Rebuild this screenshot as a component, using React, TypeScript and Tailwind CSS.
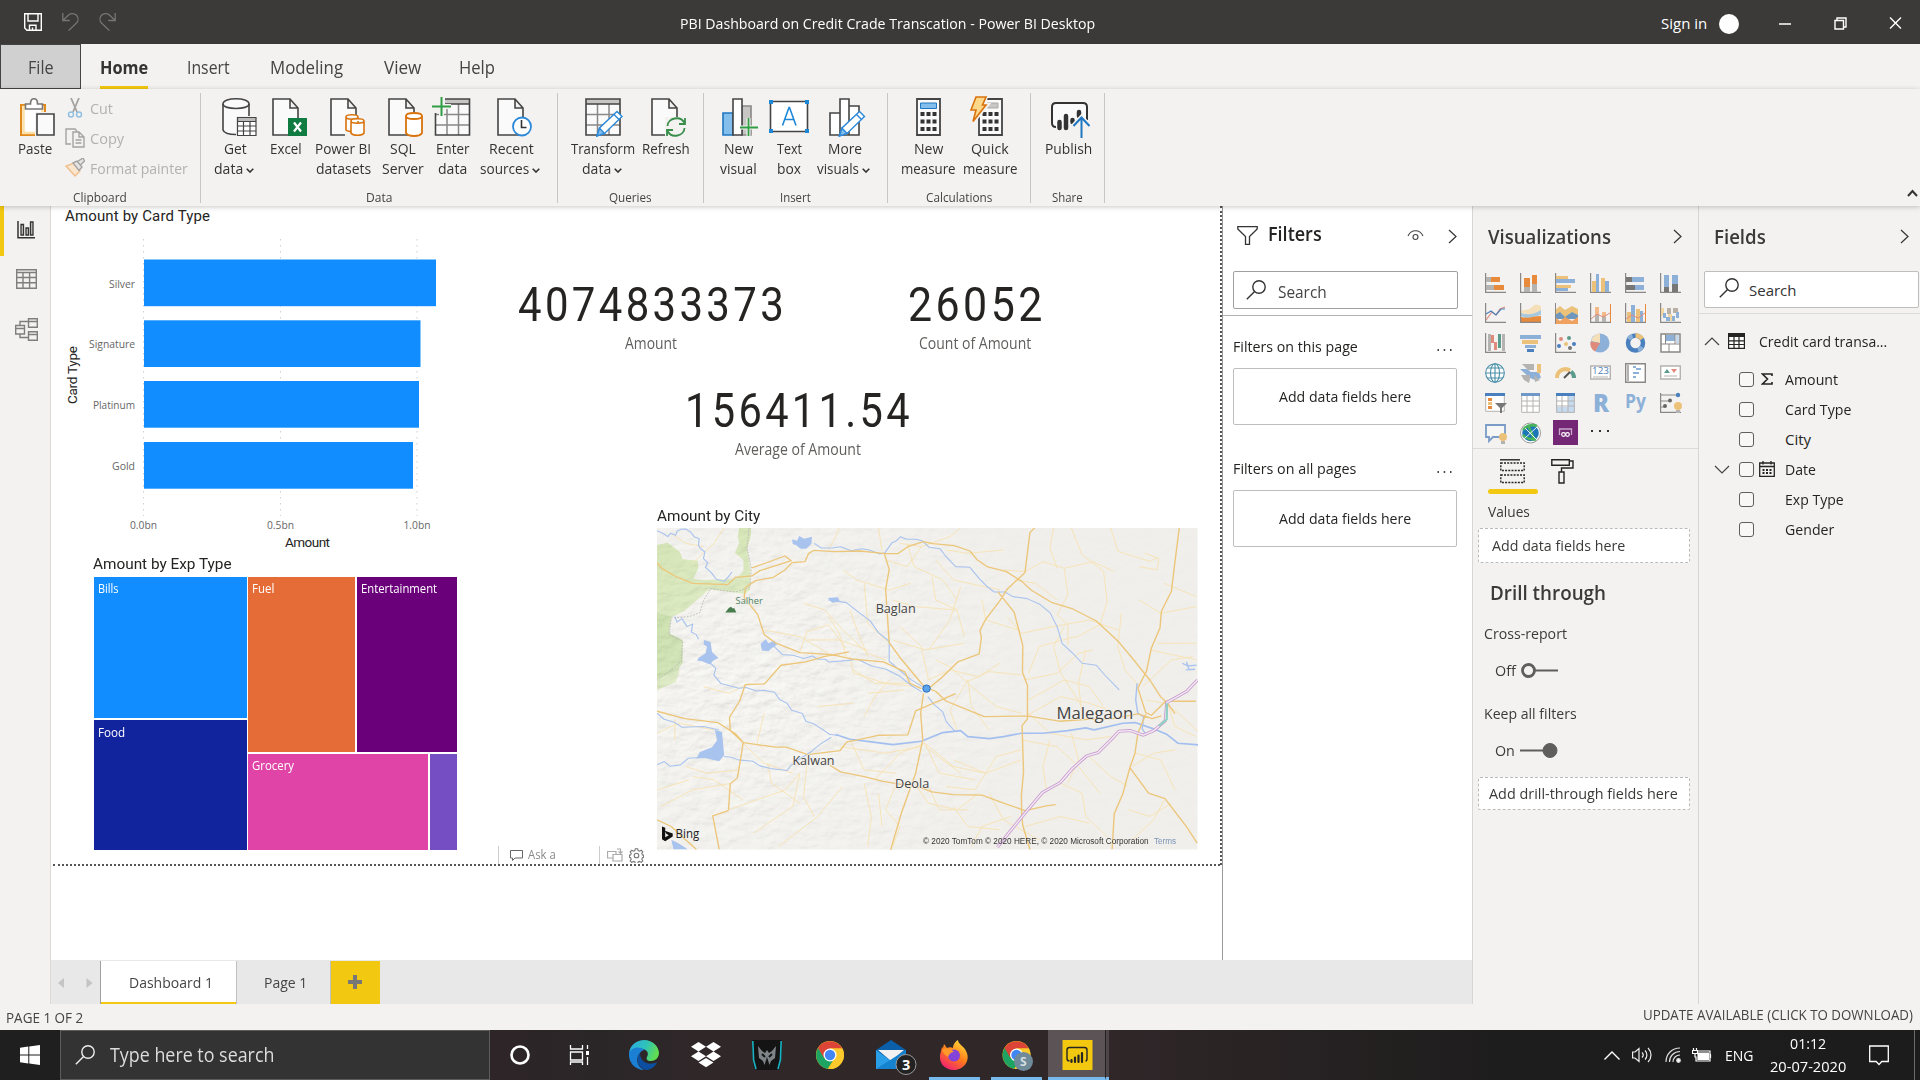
import React, { useLayoutEffect, useRef, useState } from "react";

/* Text set to an exact advance width; the glyphs are condensed or widened to fill it. */
function T({ w, c = "", children }: { w: number; c?: string; children: React.ReactNode }) {
  const ref = useRef<HTMLSpanElement>(null);
  const [s, setS] = useState(1);
  useLayoutEffect(() => {
    if (ref.current) setS(w / ref.current.offsetWidth);
  }, [w]);
  return (
    <span className={"block shrink-0 whitespace-nowrap " + c} style={{ width: w }}>
      <span ref={ref} className="inline-block origin-left" style={{ transform: `scaleX(${s})` }}>
        {children}
      </span>
    </span>
  );
}

function Chev({ dir, c = "" }: { dir: "r" | "u" | "d"; c?: string }) {
  if (dir === "r")
    return (
      <svg className={"h-[15px] w-[9px] shrink-0 " + c} viewBox="0 0 9 15" fill="none" stroke="#333" strokeWidth="1.2">
        <path d="M1 1l7 6.5L1 14" />
      </svg>
    );
  return (
    <svg className={"h-[9px] w-4 shrink-0 " + c} viewBox="0 0 16 9" fill="none" stroke="#444" strokeWidth="1.2">
      <path d={dir === "u" ? "M1 8l7-7 7 7" : "M1 1l7 7 7-7"} />
    </svg>
  );
}

function Search({ c = "", color = "#333" }: { c?: string; color?: string }) {
  return (
    <svg className={"size-5 shrink-0 " + c} viewBox="0 0 20 20" fill="none" stroke={color} strokeWidth="1.4">
      <circle cx="13" cy="7" r="6.2" />
      <path d="M8.6 11.4L.8 19.2" />
    </svg>
  );
}

/* ---------- title bar ---------- */
function TitleBar() {
  return (
    <div className="relative flex h-11 shrink-0 items-center bg-[#3b3a38] text-white">
      <svg className="ml-6 h-[18px] w-[18px]" viewBox="0 0 18 18" fill="none" stroke="#fff" strokeWidth="1.4">
        <path d="M.7.7h16.6v16.6H3L.7 15zM4 .7V8h10V.7M5.5 17.3v-5h6.5v5M8.500 14.500v3" />
      </svg>
      <svg className="ml-5 h-[18px] w-[17px]" viewBox="0 0 17 18" fill="none" stroke="#777573" strokeWidth="1.3">
        <path d="M.8 0v7.500h7M1 7.300L6.600 2C9 0 12.500.4 14.500 2.300c2 2.200 2 5.500 0 7.700L6.500 17.600" />
      </svg>
      <svg className="ml-5 h-[18px] w-[17px]" viewBox="0 0 17 18" fill="none" stroke="#777573" strokeWidth="1.3">
        <path d="M16.200 0v7.500h-7M16 7.300L10.400 2C8 0 4.500.4 2.500 2.300c-2 2.200-2 5.500 0 7.700l8 7.600" />
      </svg>
      <T w={415} c="ml-[564px] mt-[3px] text-[15px]">PBI Dashboard on Credit Crade Transcation - Power BI Desktop</T>
      <T w={46} c="ml-[566px] mt-[3px] text-[15px]">Sign in</T>
      <span className="ml-3 mt-[3px] size-5 rounded-full bg-white" />
      <svg className="ml-[40px] mt-[2px] h-3.5 w-[124px]" viewBox="0 0 124 14" fill="none" stroke="#fff" strokeWidth="1.4">
        <path d="M0 8h12M56 4.500h8.500v8.500H56zM58 4.300V2h9v9h-2.500M111 1.500l11 11M122 1.500l-11 11" />
      </svg>
    </div>
  );
}

/* ---------- ribbon ---------- */
function Tabs() {
  const tabs: [string, number, string][] = [
    ["Insert", 43, "ml-[39px]"],
    ["Modeling", 73, "ml-[40px]"],
    ["View", 37, "ml-[41px]"],
    ["Help", 36, "ml-[38px]"],
  ];
  return (
    <div className="flex h-[45px] shrink-0 bg-[#f3f2f1] text-[18px] text-[#444]">
      <div className="flex w-[81px] items-center justify-center border border-[#444] bg-[#d0d0d0]">
        <T w={26} c="mt-0.5">File</T>
      </div>
      <div className="ml-[19px] flex flex-col justify-end border-b-[3px] border-[#f2c811] pb-[5px] font-bold text-[#333]">
        <T w={48}>Home</T>
      </div>
      {tabs.map(([t, w, m]) => (
        <div key={t} className={"flex items-center pt-0.5 " + m}>
          <T w={w}>{t}</T>
        </div>
      ))}
    </div>
  );
}

const DK = "#444";
const Page = () => <path d="M1 1h17l8 9v27H1zM18 1v9h8" fill="#fafafa" stroke={DK} strokeWidth="1.6" />;
const GridBox = () => (
  <g>
    <path d="M1 1h34v36H1z" fill="#fafafa" />
    <path d="M1 1h34v5H1z" fill="#c8c6c4" />
    <path d="M1 16.500h34M1 27h34M12.500 6v31M24 6v31" stroke="#888" strokeWidth="1.500" />
    <path d="M1 1h34v36H1zM1 6h34" fill="none" stroke={DK} strokeWidth="1.600" />
  </g>
);
const Pencil = () => (
  <g stroke="#2b88d8" strokeWidth="1.400">
    <path d="M12 38l2.500-8L32 13.500l5 5L19.500 35.500z" fill="#fff" />
    <path d="M12 38l2.500-8 5 5.500z" fill="#83beec" />
    <path d="M29 16.500l5 5" />
  </g>
);
const Calc = () => (
  <g>
    <path d="M1 1h23v36H1z" fill="#fafafa" stroke={DK} strokeWidth="1.800" />
    {[14, 21.5, 29].map((y) => (
      <path key={y} d={`M4.500 ${y}h4v4h-4zM10.500 ${y}h4v4h-4zM16.500 ${y}h4v4h-4z`} fill="#333" />
    ))}
  </g>
);

const icons: Record<string, React.ReactNode> = {
  get: (
    <g>
      <path d="M1 6c0-7 26-7 26 0v26c-2 6-24 6-26 0z" fill="#fafafa" stroke={DK} strokeWidth="1.600" />
      <path d="M1 6c0 6 26 6 26 0" fill="none" stroke={DK} strokeWidth="1.600" />
      <path d="M14 18h21v21H14z" fill="#f3f2f1" />
      <path d="M15.500 19.500H34V37.500H15.500z" fill="#fff" />
      <path d="M15.500 19.500H34v4H15.500z" fill="#bbb" />
      <path d="M15.500 19.500H34V37.500H15.500zM15.500 23.500H34M15.500 28H34M15.500 33H34M21.500 23.500v14M28 23.500v14" fill="none" stroke={DK} strokeWidth="1.200" />
    </g>
  ),
  excel: (
    <g>
      <Page />
      <path d="M16 20h19v18H16z" fill="#107c41" />
      <path d="M22 24.500l7 9M29 24.500l-7 9" stroke="#fff" strokeWidth="2.200" />
    </g>
  ),
  pbi: (
    <g>
      <Page />
      <path d="M15 17h19v21H15z" fill="#f3f2f1" />
      <g fill="#fff" stroke="#d9730d" strokeWidth="1.600">
        <path d="M16 19c0-3 12-3 12 0v13c-2 2-10 2-12 0zM16 19c0 3 12 3 12 0" />
        <path d="M21 23c0-3 13-3 13 0v12c-2 3-11 3-13 0zM21 23c0 3 13 3 13 0" />
      </g>
    </g>
  ),
  sql: (
    <g>
      <Page />
      <path d="M18 18c0-4 16-4 16 0v17c-2 4-14 4-16 0z" fill="#fff" stroke="#d9730d" strokeWidth="1.800" />
      <path d="M18 18c0 4 16 4 16 0" fill="none" stroke="#d9730d" strokeWidth="1.800" />
    </g>
  ),
  enter: (
    <g>
      <g transform="translate(2.500 0)"><GridBox /></g>
      <path d="M0 0h13v15H0z" fill="#f3f2f1" />
      <path d="M0 8.500h19M9.500-2v20" stroke="#f3f2f1" strokeWidth="5" />
      <path d="M0 8.500h19M9.500-1v19" stroke="#2f9e44" strokeWidth="2" />
    </g>
  ),
  recent: (
    <g>
      <Page />
      <circle cx="25" cy="28.500" r="9" fill="#fff" stroke="#2b88d8" strokeWidth="1.800" />
      <path d="M24.500 22v7.500h5" fill="none" stroke="#333" strokeWidth="1.600" />
    </g>
  ),
  transform: <g><GridBox /><Pencil /></g>,
  refresh: (
    <g>
      <Page />
      <path d="M14 19h21v20H14z" fill="#f3f2f1" />
      <path d="M16.500 28c0-8 13-11 17-3M34 20v6h-6M33.500 30c0 8-13 11-17 3M16 38v-6h6" fill="none" stroke="#388e4a" strokeWidth="1.800" />
    </g>
  ),
  newvis: (
    <g strokeWidth="1.600">
      <path d="M1 15h10v22H1z" fill="#83beec" stroke="#1e77c0" />
      <path d="M20 8h9v29h-9z" fill="#c8c6c4" stroke="#8a8886" />
      <path d="M11 1h9v36h-9z" fill="#fff" stroke={DK} />
      <path d="M18 29.500h18M26.500 20v18" stroke="#f3f2f1" strokeWidth="4" />
      <path d="M18 29.500h18M26.500 20v18" stroke="#2f9e44" strokeWidth="1.800" />
    </g>
  ),
  textbox: (
    <g>
      <path d="M1.500 3.500h37v30h-37z" fill="#fff" stroke={DK} strokeWidth="1.600" />
      <path d="M0 2h4v4H0zM36 2h4v4h-4zM0 31h4v4H0zM36 31h4v4h-4z" fill="#1e88d8" />
      <path d="M13.500 27.500L20 9.500h.5l6.500 18M15.500 21.500h9.500" fill="none" stroke="#1e88d8" strokeWidth="1.600" />
    </g>
  ),
  morevis: (
    <g>
      <g strokeWidth="1.600" fill="#fff" stroke={DK}>
        <path d="M1 15h10v22H1zM20 8h10v29H20zM11 1h9v36h-9z" />
      </g>
      <g transform="translate(-1.500 0)"><Pencil /></g>
    </g>
  ),
  newmeas: (
    <g>
      <Calc />
      <path d="M4.500 5h16v5.500h-16z" fill="#83beec" stroke="#1e77c0" />
    </g>
  ),
  quick: (
    <g>
      <g transform="translate(8 0)">
        <Calc />
        <path d="M9 5h11v5H9z" fill="#c8c6c4" stroke="#aaa" />
      </g>
      <path d="M5-1h11l-3 8h4L3 24l3-12H0z" fill="#fcd88a" stroke="#f3f2f1" strokeWidth="4" />
      <path d="M6-1h10l-3.500 8H16L3 23.500 6 12H1z" fill="#fcd88a" stroke="#d9730d" strokeWidth="1.600" />
    </g>
  ),
  publish: (
    <g>
      <path d="M5 29c-3 0-4-1-4-4V9c0-3 1-4 4-4h27c3 0 4 1 4 4v13" fill="#fafafa" stroke="#333" strokeWidth="2" />
      <path d="M8.500 24v6M15 18v12M21.500 22v2M28 14v4" stroke="#333" strokeWidth="4.500" strokeLinecap="round" />
      <path d="M30.500 40V20M22.500 28l8-8.500 8 8.500" fill="none" stroke="#f3f2f1" strokeWidth="5" />
      <path d="M30.500 40V20M22.500 28l8-8.500 8 8.500" fill="none" stroke="#1e77c0" strokeWidth="2" />
    </g>
  ),
};

type Btn = { i: string; l: [string, number][]; w: string; m: string; chev?: boolean };
function RibbonButton({ b }: { b: Btn }) {
  return (
    <div className={"flex shrink-0 flex-col items-center " + b.w}>
      <svg className={"h-10 w-10 shrink-0 overflow-visible " + b.m} viewBox="0 0 40 40">
        {icons[b.i]}
      </svg>
      {b.l.map(([t, w], k) => (
        <div key={t} className="flex h-5 items-center gap-[3px] leading-5">
          <T w={w}>{t}</T>
          {b.chev && k === b.l.length - 1 && (
            <svg className="mr-[2px] mt-1 h-[5px] w-[8px]" viewBox="0 0 8 5" fill="none" stroke="#333" strokeWidth="1.600">
              <path d="M.7.7L4 4 7.300.7" />
            </svg>
          )}
        </div>
      ))}
    </div>
  );
}
function Group({ w, label, lw, btns, pl, children }: { w: string; label: string; lw: number; btns?: Btn[]; pl: string; children?: React.ReactNode }) {
  return (
    <div className={"mt-1 flex h-[110px] shrink-0 flex-col border-r border-[#c8c6c4] " + w}>
      <div className={"flex h-[97px] shrink-0 pt-[5px] " + pl}>
        {children}
        {btns?.map((b) => <RibbonButton key={b.i} b={b} />)}
      </div>
      <div className="flex justify-center text-[12.5px] leading-4 text-[#444]">
        <T w={lw}>{label}</T>
      </div>
    </div>
  );
}
function Ribbon() {
  return (
    <div className="relative z-10 flex h-[117px] shrink-0 bg-[#f3f2f1] text-[15px] text-[#333] shadow-[0_1px_5px_rgba(0,0,0,0.22)]">
      <Group w="w-[201px]" label="Clipboard" lw={54} pl="pl-[16px]">
        <div className="flex w-[38px] flex-col items-center">
          <svg className="ml-[3px] h-10 w-10 shrink-0" viewBox="0 0 40 40">
            <path d="M4 7h24v30H4z" fill="#fff" stroke="#e08a1e" strokeWidth="2" />
            <path d="M6.500 9h19v26h-19z" fill="none" stroke="#fce0a6" strokeWidth="2.500" />
            <path d="M8.500 11V6h5c0-7 7-7 7 0h5v5z" fill="#fff" stroke="#777" strokeWidth="1.600" />
            <path d="M18 14h20v26H18z" fill="#f3f2f1" />
            <path d="M20 16h17v21H20z" fill="#fafafa" stroke={DK} strokeWidth="1.600" />
          </svg>
          <T w={34} c="leading-5">Paste</T>
        </div>
        <div className="-mt-px ml-[11px] flex flex-col text-[#b3b1af]">
          {[
            ["Cut", 23],
            ["Copy", 34],
            ["Format painter", 98],
          ].map(([t, w], k) => (
            <div key={t} className="flex h-[30px] items-center pb-2">
              <svg className="h-5 w-5" viewBox="0 0 20 20" fill="none" strokeWidth="1.400" stroke="#a5a3a1">
                {k === 0 && (
                  <g>
                    <path d="M6 0l6 14M14 0L8 14" strokeWidth="1.800" />
                    <circle cx="6" cy="16.500" r="2.500" stroke="#8fbfe0" />
                    <circle cx="14" cy="16.500" r="2.500" stroke="#8fbfe0" />
                  </g>
                )}
                {k === 1 && <path d="M6 16H1V1h9l2 2M8 4h6l5 5v10H8zM14 4v5h5M10.500 12h6M10.500 15h6" />}
                {k === 2 && (
                  <g>
                    <path d="M1 8l9 10 5-5-6-8z" fill="#fbe5cd" stroke="#efbe8b" />
                    <path d="M8 5l4-2 5 6-3 3.500zM12.500 3.500L18 0l1.500 3-4 4" fill="#e5e4e3" />
                  </g>
                )}
              </svg>
              <T w={w as number} c="ml-[5px] leading-5">{t}</T>
            </div>
          ))}
        </div>
      </Group>
      <Group
        w="w-[357px]" label="Data" lw={26} pl="pl-[11px]"
        btns={[
          { i: "get", l: [["Get", 23], ["data", 29]], w: "w-[46px]", m: "ml-[14px]", chev: true },
          { i: "excel", l: [["Excel", 32]], w: "w-[56px]", m: "ml-[12px]" },
          { i: "pbi", l: [["Power BI", 56], ["datasets", 55]], w: "w-[58px]", m: "ml-[14px]" },
          { i: "sql", l: [["SQL", 26], ["Server", 42]], w: "w-[61px]", m: "ml-[10px]" },
          { i: "enter", l: [["Enter", 33], ["data", 29]], w: "w-[39px]", m: "-ml-[2px]" },
          { i: "recent", l: [["Recent", 45], ["sources", 49]], w: "w-[78px]", m: "ml-[11px]", chev: true },
        ]}
      />
      <Group
        w="w-[146px]" label="Queries" lw={43} pl="pl-[11px]"
        btns={[
          { i: "transform", l: [["Transform", 64], ["data", 29]], w: "w-[67px]", m: "ml-[4px]", chev: true },
          { i: "refresh", l: [["Refresh", 48]], w: "w-[60px]", m: "ml-[9px]" },
        ]}
      />
      <Group
        w="w-[184px]" label="Insert" lw={31} pl="pl-[9px]"
        btns={[
          { i: "newvis", l: [["New", 29], ["visual", 37]], w: "w-[51px]", m: "ml-[7px]" },
          { i: "textbox", l: [["Text", 25], ["box", 24]], w: "w-[50px]", m: "" },
          { i: "morevis", l: [["More", 34], ["visuals", 42]], w: "w-[61px]", m: "ml-[8px]", chev: true },
        ]}
      />
      <Group
        w="w-[143px]" label="Calculations" lw={66} pl="pl-[9px]"
        btns={[
          { i: "newmeas", l: [["New", 29], ["measure", 55]], w: "w-[62px]", m: "ml-[15px]" },
          { i: "quick", l: [["Quick", 38], ["measure", 55]], w: "w-[62px]", m: "-ml-px" },
        ]}
      />
      <Group
        w="w-[74px]" label="Share" lw={31} pl="pl-[7px]"
        btns={[{ i: "publish", l: [["Publish", 47]], w: "w-[60px]", m: "ml-[6px]" }]}
      />
      <svg className="ml-auto mr-[2px] mt-[100px] h-[8px] w-[11px]" viewBox="0 0 11 8" fill="none" stroke="#333" strokeWidth="2">
        <path d="M1 7l4.500-5L10 7" />
      </svg>
    </div>
  );
}

/* ---------- left rail ---------- */
function Rail() {
  return (
    <div className="flex w-[51px] shrink-0 flex-col border-r border-[#dcdad8] bg-[#f3f2f1]">
      <div className="flex h-[50px] items-start border-l-4 border-[#f2c811] pl-[13px] pt-[15px]">
        <svg className="h-[18px] w-[18px]" viewBox="0 0 18 18" fill="none" stroke="#333" strokeWidth="1.300">
          <path d="M1 0v16.800h17" strokeWidth="1.500" />
          <path d="M4 3.500h2.500V14H4zM9 7h2.500v7H9zM13.500 1H16v13h-2.500z" fill="#c9c8c6" />
        </svg>
      </div>
      <svg className="ml-[16px] mt-[13px] h-5 w-[21px]" viewBox="0 0 21 20" fill="none" stroke="#807e7c" strokeWidth="1.400">
        <path d="M.7.7h19.600v18.600H.7zM.7 3.500h19.600M.7 8.500h19.600M.7 13.800h19.600M7 3.500v16M13.600 3.500v16" />
      </svg>
      <svg className="ml-[15px] mt-[29px] h-[23px] w-[23px]" viewBox="0 0 23 23" fill="none" stroke="#807e7c" strokeWidth="1.400">
        <path d="M13.500.7h8.800v8.600h-8.800zM13.500 3.500h8.800M.7 7.500h8.800V16H.7zM.7 10.500h8.800M13.500 13.700h8.800v8.600h-8.800zM13.500 16.500h8.800M5 7.500V3.500h8.500M5 16v3.500h8.500" />
      </svg>
    </div>
  );
}

/* ---------- report visuals ---------- */
function BarChart() {
  const bars: [string, number, number, number][] = [
    ["Silver", 292, 53.5, 26],
    ["Signature", 276.500, 114.300, 46],
    ["Platinum", 275, 175, 42],
    ["Gold", 269, 236, 23],
  ];
  return (
    <svg className="absolute left-[12px] top-0 h-[350px] w-[400px]" viewBox="63 206 400 350">
      <text x="65" y="221" fontSize="15" className="font-[Roboto]" fill="#252423" textLength="145">Amount by Card Type</text>
      {[143.500, 280.500, 417].map((x, k) => (
        <g key={x}>
          <path d={`M${x} 239V516`} stroke="#d0d0d0" strokeDasharray="1.500 4.500" />
          <text x={x} y="529" textAnchor="middle" fontSize="11.500" fill="#666" textLength="27" lengthAdjust="spacingAndGlyphs">
            {["0.0bn", "0.5bn", "1.0bn"][k]}
          </text>
        </g>
      ))}
      {bars.map(([n, w, y, tw]) => (
        <g key={n}>
          <rect x="144" y={y + 206} width={w} height="46.700" fill="#118dff" />
          <text x="135" y={y + 234} textAnchor="end" fontSize="11.500" fill="#666" textLength={tw} lengthAdjust="spacingAndGlyphs">{n}</text>
        </g>
      ))}
      <text x="285" y="547" fontSize="13.500" className="font-[Roboto]" fill="#252423" textLength="45">Amount</text>
      <text transform="translate(76.500 404) rotate(-90)" fontSize="13.500" className="font-[Roboto]" fill="#252423" textLength="58">Card Type</text>
    </svg>
  );
}

function TreeMap() {
  return (
    <div className="absolute left-[42px] top-[348px] text-[12.5px] leading-4 text-white">
      <T w={139} c="h-[23px] font-[Roboto] text-[15px] leading-5 text-[#252423]">Amount by Exp Type</T>
      <div className="ml-[0.5px] flex h-[273px] w-[363.5px] gap-[1.5px]">
        <div className="flex w-[153px] flex-col gap-[2px]">
          <div className="h-[141px] bg-[#118dff] pl-[4px] pt-[4px]"><T w={21}>Bills</T></div>
          <div className="grow bg-[#12239e] pl-[4px] pt-[5px]"><T w={27}>Food</T></div>
        </div>
        <div className="flex grow flex-col gap-[2px]">
          <div className="flex h-[175px] gap-[2px]">
            <div className="w-[107px] bg-[#e66c37] pl-[4px] pt-[4px]"><T w={22}>Fuel</T></div>
            <div className="grow bg-[#6b007b] pl-[4px] pt-[4px]"><T w={76}>Entertainment</T></div>
          </div>
          <div className="flex grow gap-[2px]">
            <div className="w-[180px] bg-[#e044a7] pl-[4px] pt-[4px]"><T w={42}>Grocery</T></div>
            <div className="grow bg-[#744ec2]" />
          </div>
        </div>
      </div>
    </div>
  );
}

function Card({ v, w, label, lw, pos }: { v: string; w: number; label: string; lw: number; pos: string }) {
  return (
    <div className={"absolute flex flex-col items-center " + pos}>
      <T w={w} c="h-[50px] font-[Roboto] text-[49px] font-[450] leading-[50px] text-[#252423]">
        <span className="mr-[-0.08em] tracking-[0.08em]">{v}</span>
      </T>
      <T w={lw} c="mt-[1px] text-[15.5px] leading-6 text-[#605e5c]">{label}</T>
    </div>
  );
}

const minor = [
  "M120 190l60-60 30-50M60 100l40 30 50 10M500 150l20-40 10-26M640 84l10 70M700 130l60 10 80-30 30-26M720 130l20 70 80 40 40 60M660 180l60 20 40-60M540 210l40 30 90 30 60-20M830 150l60 10 100-10M990 210l60 5 50-30 60 20 80-20 60 30M1160 205l10 80-30 60 30 30 0 60M1180 84l30 80 60 50 10 90-20 70-70 40M1290 84l20 70 90 30 20-10",
  "M1370 200l50 10 5-35-40-15M1130 84l-10 60 20 60M1020 240l60 10 60 50M1000 350l40 50 90-20 100-20 80 30M930 300l10 60 90 30M870 260l-30 100-60 90M800 180l50 60 130 30M790 230l10 70 60 30 20 80M680 300l60 20 120 10M680 420l90 30 110-20M700 380l60 60 20 100M600 250l10 120 60 60",
  "M430 310l60 20 50 60 70 70 50 20M420 455l20-60 60-20 50 70M500 350l30 50 20 70M560 330l20 60 30 80M320 390l100 20 80 50M440 420l90 0 80 30M560 470l10 50 90 30 80 10M570 510l60 40 100 0M670 540l-40 50-30 60M610 580l100-10M780 540l60-30 80 20 60-40M890 540l10 80 50 70M890 545l60-30 90 10M890 540l-50 90 20 60M800 480l40 20 60 60 70 60 70 20",
  "M1050 540l90-20 60-60 40-10M1060 600l100-60 70 20 40 60M1060 520l30-80 100-30M1160 380l-30 60 20 80 60 100M1220 450l-20 100 10 100M1050 650l100-60 80 20 80 30M1320 340l-10 100 20 70 40 50M1420 430l110 0M1400 450l130 30M1380 560l80-80 60-10M1390 600l50 10 40 30 60 60M1450 610l20 70 60 30M1370 300l60 40 100-20M1440 250l90 40",
  "M770 730l80 70 90 20 100-40M770 730l-70 30-70 80M770 730l40 90 100 20M770 740l100 80M760 740l-100 20-130-20M740 850l40 60 80 20 60-50M690 850l-30 80 40 50-20 60M600 850l20 100-10 90M780 860l30 70 80 0M850 780l90 40 30-50 70-20M1040 720l100 20 60 60 60 80M940 820l-30 50-80-10M640 880l10 100M560 720l40 90 90 10",
  "M1060 640l60 60 100 20 70-10M1150 850l60 30 10 70 60 60M1230 770l60 60 50 30M1350 800l60-40 60-10M1360 760l70 20 40 90M1180 700l20 80-30 70M1120 720l-20 80 10 70M1440 900l-30 60-60 60M1340 930l60 20 60-40M1050 980l100-30 80 20M950 880l40 80 100 60M900 1040l30-60 80-30M850 920l40 60 90 10",
  "M260 730l60 60 80 30M230 850l-110 20-90 50M260 900l-80-60-60-10M330 790l10 60 80 60M420 820l-20 100-110 80M220 930l80-30 80-30 40-50M440 790l-10 100 30 60M20 700l60-30 100 20M70 720l0-60M100 800l60 20 90-10M20 870l90-30M540 860l-40 50-30 40-110 90M320 640l-20 90 20 20M470 620l100-10M150 560l70 20 60-30",
];
const roads = [
  "M20 188l14 18 36 22 50 22 98 4 22-22 46-4 22-16 88-30-18-14-92 36M268 262l28-20 50-10 32-22 20-22 36-3 10-24 15-10 60 4 70-2 70 8h35l30-22 42-14 26 6 60 6 44 16 20 26 30 22 52 14 44 30 26 26 56 36 60 20 66 36 60 60 50 64 40 54 30 50 20 20 20 30M268 262l-4 30 38 52 18 60 30 24 70 30 90 6 60 14 84 8 60 30 14 34 32 16M20 634l78 22 92 12 50 34 22 26 90 14h30l60 22 90-12 20-26 30-6 60-14 80-1 22-72 112-52M220 932l5-80 20-18 12-76 4-30-36-36-2-40 28-48 16-50 54-2 46-56 70-10 50-16 70-14",
  "M656 160l14 48 -10 60 10 160 34 50 56 72 12 14 10 0 36-32 44-46 60-24 6-50-4-20 16-34 40-56 20-34 50-50 14-120 58-64M974 275l46 62 24 100-1 80 14 40v100l-15 20 4 140-6 70 1 60 3 30 20 72M780 566l20 8 30 30 46 20 60 26 120-2 90 16 80-6 70-2 70-14 40 14 26-8M766 580l-8 60 6 80-20 100-40 120-30 110M504 796l30 20 66 14 50 14 110 20 30 12 60 8 80 2 60 24 60 22 60-14 26-4M1482 84l-12 100-10 90-28 60-4 50-24 60-14 70-24 50 22 74 16 8 40-42 84 0M1388 644l-22 56-8 60-14 42-20 80-24 60-6 106M1344 804l52 76 46 16 60 84 30 50M220 932l-44 16 18 100M20 960l40 20 40 40 30 28",
];
const rivers = [
  "M20 92l20 10 10 8 8-10 14 6 4-12 10-6 14-1 14 9 10 14 14 6-2 20 6 10 12 10-4 20 12 12-6 14 16 16 14 20 22 6 12-14 10-14",
  "M460 130l20 14 30 0 24-4 30 12 30-6 20 4 30 12 14-4 20-30 10-4 14-14 16 8 28 0 16 4 20 20 30 4 14 20 30 34 40 2 26 34 20 22 22 18 30 0 22 14 40 6 34 16 30 26 20 42 14 50 30 30 26 30 40 6 24 30 40 44",
  "M70 350l6 16 14 -10 14 24 16 -8 -4 24 14 8 6 14M165 485l20 20 -6 20 20 26 50 14 20 -2 30 10 20 -2 30 6 14 22 20 10 14 22 30 10 10 24 20 6 24 16 22 16 24 4",
  "M345 436l26 28 30 2 30 10 24 -8 16 10 20 0 10 8 50 -4 30 -4 40 20 40 10 40 22 30 26 30 20M500 300l50 8 36 30 30 24 24 36 30 26 0 60 26 24 36 32 40 26",
  "M20 640l20 18 30 10 20 14 60 -2 44 10M20 795l20 -10 16 14 30 -4 22 -20 30 -2M208 770l20 2 20 8 40 4 20 14 30 8 46 6 10 -14 24 -20 30 -20 30 -26 30 -20M778 590l18 24 24 22 10 30 24 28",
];

function MapVisual() {
  return (
    <div className="absolute left-[606px] top-[300px]">
      <T w={103} c="h-[22px] font-[Roboto] text-[15px] leading-5 text-[#252423]">Amount by City</T>
      <svg className="h-[321.5px] w-[540.5px]" viewBox="20 84 1513 965" preserveAspectRatio="none" fill="none" strokeLinejoin="round">
        <defs>
          <filter id="relief" x="0" y="0" width="100%" height="100%">
            <feTurbulence type="fractalNoise" baseFrequency="0.022 0.034" numOctaves="4" seed="11" />
            <feDiffuseLighting surfaceScale="5" diffuseConstant="1.080" lightingColor="#fbfaf7">
              <feDistantLight azimuth="235" elevation="62" />
            </feDiffuseLighting>
          </filter>
          <radialGradient id="fade" gradientUnits="userSpaceOnUse" cx="240" cy="560" r="900">
            <stop offset="0" stopColor="#fff" stopOpacity="0.55" />
            <stop offset="0.4" stopColor="#fff" stopOpacity="0.36" />
            <stop offset="1" stopColor="#fff" stopOpacity="0.04" />
          </radialGradient>
          <mask id="hills"><rect x="20" y="84" width="1513" height="965" fill="url(#fade)" /></mask>
        </defs>
        <rect x="20" y="84" width="1513" height="965" fill="#f0efeb" />
        <path d="M20 134l30-6 34 28 8 22 42 4 2 22-14 32-14-4 30 8 100-2 24-24 0-34-24-22 12-28-4-20 4-26h34l-2 28-10 34 10 60-2 64-14 12-100-14-70 66-40 20-6 14-10 30 42 18v104l-10 28-60 26-2-90z" fill="#c8df9f" />
        <path d="M60 350l-6 50 38 20v70l-20 24-52 24V340z" fill="#b0d284" />
        <g mask="url(#hills)"><rect x="20" y="84" width="1513" height="965" filter="url(#relief)" /></g>
        <path d="M278 84l-6 60 12 60-4 58-40 14-70-10-20 36-10 36-30 12-50 4-6 50 38 20-4 60-30 28-40 30" stroke="#b9b7b5" strokeWidth="2.500" strokeDasharray="5 4" />
        <g stroke="#f7e2b2" strokeWidth="2.600">{minor.map((d) => <path key={d} d={d} />)}</g>
        <g stroke="#a9c3ef" strokeWidth="3.200">{rivers.map((d) => <path key={d} d={d} />)}</g>
        <path d="M520 704l40 14 60 8 60 8 80-10 60-26 50-6 20 18 60 6 40-6 50-10 60 0 70-8 50-8 24 6 80-20 34-2 60 22 30 14 30 26 50 4 34 4" stroke="#a3bff0" strokeWidth="5" />
        <path d="M1364 550l-4 50 6 40 16 10-4 36 12 20M1490 490l16 8 24-2M1500 510l26-2M1502 486l8 24" stroke="#a9c3ef" strokeWidth="4" />
        <path d="M398 118l14 4 6-14 14 8 22-6-2 22-14 14-16 0-12-10-10-4zM310 432l14-14 8 12 16-8 8 12-16 12-8 8-18-2zM136 474l20-14 4-20-10-6 2-14 18 6 4 30 18 18-14 8-10 12-22-10-14-2zM182 690l20 6 6 70-14 18-40-10-24 2 10-20 34-14 14-20zM60 1020l20 10 26 18H66zM498 294l28-2 6 12-22 4z" fill="#a9c3ef" />
        <g stroke="#ecc67a" strokeWidth="3.900">{roads.map((d) => <path key={d} d={d} />)}</g>
        <path d="M1533 540l-30 34-56 34-4 54-32 30-30 14-36-14-32 2-24 28-34 36-32 10-40 38-34 42-50 30-46 58-46 60-34 46" stroke="#c99ad0" strokeWidth="9" />
        <path d="M1533 540l-30 34-56 34-4 54-32 30-30 14-36-14-32 2-24 28-34 36-32 10-40 38-34 42-50 30-46 58-46 60-34 46" stroke="#f3ecf3" strokeWidth="4" />
        <path d="M1447 610v48l-22 20" stroke="#8cd3c4" strokeWidth="6" />
        <path d="M211 338l10-14 6-4 5 6 4-2 6 14z" fill="#4a7d4e" />
        <g fill="#444" stroke="#f4f3ef" strokeWidth="4" paintOrder="stroke" className="font-medium">
          <text x="240" y="313" fontSize="28" fill="#4d7f5f" strokeWidth="2" textLength="76" lengthAdjust="spacingAndGlyphs">Salher</text>
          <text x="632" y="340" fontSize="38" textLength="112" lengthAdjust="spacingAndGlyphs">Baglan</text>
          <text x="1138" y="656" fontSize="51" textLength="215" lengthAdjust="spacingAndGlyphs">Malegaon</text>
          <text x="399" y="794" fontSize="38" textLength="118" lengthAdjust="spacingAndGlyphs">Kalwan</text>
          <text x="686" y="865" fontSize="38" textLength="96" lengthAdjust="spacingAndGlyphs">Deola</text>
        </g>
        <ellipse cx="774.500" cy="566" rx="10.500" ry="11" fill="#5aa2ea" stroke="#1b62b5" strokeWidth="2.500" />
        <path d="M34 980l9 4v28l10-6-7-4-4-9 22 8v9l-21 14-9-6z" fill="#111" />
        <text x="72" y="1016" fontSize="38" fill="#222" textLength="66" lengthAdjust="spacingAndGlyphs">Bing</text>
      </svg>
      <div className="absolute right-[22px] bottom-[3px] flex gap-[5px] font-['Liberation_Sans'] text-[8.5px] leading-3 text-[#333]">
        <T w={226}>© 2020 TomTom © 2020 HERE, © 2020 Microsoft Corporation</T>
        <T w={22} c="text-[#7a93b8] underline">Terms</T>
      </div>
    </div>
  );
}

function Report() {
  return (
    <div className="flex h-[659px] w-[1169px] shrink-0 flex-col bg-white">
      <div className="relative ml-[2px] h-[660px] shrink-0 border-b-2 border-dotted border-[#555]">
        <div className="absolute -left-[2px] top-0">
          <BarChart />
          <TreeMap />
          <Card v="4074833373" w={266} label="Amount" lw={52} pos="left-[467px] top-[74px]" />
          <Card v="26052" w={134} label="Count of Amount" lw={112} pos="left-[857px] top-[74px]" />
          <Card v="156411.54" w={225} label="Average of Amount" lw={126} pos="left-[634px] top-[180px]" />
          <MapVisual />
          <div className="absolute left-[447px] top-[640px] flex h-[18px] items-center text-[#888]">
            <span className="h-[18px] w-px bg-[#ccc]" />
            <svg className="ml-[11px] mt-px h-[11px] w-[13px]" viewBox="0 0 13 11" fill="none" stroke="#666">
              <path d="M.5.500h12v7.500H5L2.500 10.500V8H.5z" />
            </svg>
            <T w={28} c="ml-[5px] text-[12.500px] leading-4">Ask a</T>
            <span className="ml-[43px] h-[18px] w-px bg-[#ccc]" />
            <svg className="ml-[7px] h-[14px] w-[16px]" viewBox="0 0 16 14" fill="none" stroke="#aaa" strokeWidth="1.200">
              <path d="M6 10H.5V3.500H9V6M6 6.500h9V13H6zM10 1h3.500v4M11.500 3.500l2 2 2-2" />
            </svg>
            <svg className="ml-[6px] h-[15px] w-[15px]" viewBox="0 0 15 15" fill="none" stroke="#777" strokeWidth="1.100">
              <path d="M6.300.8h2.400l.4 1.800 1.500.6 1.600-1 1.600 1.600-1 1.600.6 1.500 1.100.2v2.300l-1.100.3-.6 1.500 1 1.600-1.600 1.600-1.600-1-1.500.6-.4 1.700H6.300l-.4-1.700-1.500-.6-1.600 1-1.600-1.600 1-1.600-.6-1.500L.5 9.400V7.100l1.100-.2.6-1.500-1-1.600 1.600-1.600 1.600 1 1.500-.6z" />
              <circle cx="7.500" cy="7.500" r="2.300" />
            </svg>
          </div>
        </div>
      </div>
    </div>
  );
}

function DropBox({ mt }: { mt: string }) {
  return (
    <div className={"flex h-[57px] w-[224px] items-center justify-center rounded-[2px] border border-[#c0bebc] " + mt}>
      <T w={132}>Add data fields here</T>
    </div>
  );
}
function FilterHead({ t, w, mt }: { t: string; w: number; mt: string }) {
  return (
    <div className={"flex h-5 w-[219px] items-center justify-between leading-5 " + mt}>
      <T w={w}>{t}</T>
      <svg className="mt-[7px] h-[2px] w-[15px]" viewBox="0 0 15 2" fill="#444"><path d="M.5 0h1.500v2H.5zM6.700 0h1.500v2H6.700zM13 0h1.500v2H13z" /></svg>
    </div>
  );
}
function Filters() {
  return (
    <div className="flex h-[754px] w-[250px] shrink-0 flex-col border-l border-[#999] bg-white text-[15px] text-[#252423]">
      <div className="flex h-[59px] items-center">
        <svg className="ml-[14px] h-[19px] w-[21px]" viewBox="0 0 21 19" fill="none" stroke="#333" strokeWidth="1.300">
          <path d="M.8.700h19.400v2.300l-7.700 7.500v7.800h-4v-7.800L.8 3z" />
        </svg>
        <T w={54} c="ml-[10px] -mt-[2px] text-[19px] font-semibold">Filters</T>
        <svg className="ml-[85px] h-[11px] w-[17px]" viewBox="0 0 17 11" fill="none" stroke="#444" strokeWidth="1.100">
          <path d="M1 6c3-7 12-7 15 0" /><circle cx="8.500" cy="7" r="2.500" />
        </svg>
        <Chev dir="r" c="ml-[24px] mt-px" />
      </div>
      <div className="ml-[10px] mt-[6px] flex h-[38px] w-[225px] items-center rounded-[2px] border border-[#a19f9d]">
        <Search c="ml-[12px]" />
        <T w={49} c="ml-[12px] mt-[3px] text-[16px] text-[#444]">Search</T>
      </div>
      <div className="mt-[6px] h-px bg-[#b3b0ad]" />
      <div className="flex flex-col pl-[10px]">
        <FilterHead t="Filters on this page" w={125} mt="mt-[20px]" />
        <DropBox mt="mt-[12px]" />
        <FilterHead t="Filters on all pages" w={123} mt="mt-[33px]" />
        <DropBox mt="mt-[12px]" />
      </div>
    </div>
  );
}

/* ---------- visualizations pane ---------- */
const G = "#8a8886", O = "#e88a3c", Y = "#ecc27a", B = "#8db0d8", LG = "#b5b3b1", DB = "#4a80bd", S = "#e08a7c", GR = "#5b9b8b";
const Ax = () => <path d="M.6 0v19.400H21" fill="none" stroke={G} strokeWidth="1.200" />;
const R = ({ f, d }: { f: string; d: string }) => <path d={d} fill={f} />;
const viz: React.ReactNode[] = [
  <><Ax /><R f={LG} d="M1 4h5v5H1zM1 12h8v5H1z" /><R f={O} d="M6 4h9v5H6zM9 12h10v5H9z" /></>,
  <><Ax /><R f={O} d="M4 5h6v9H4zM12 2h5v9h-5z" /><R f={LG} d="M4 14h6v5H4zM12 11h5v8h-5z" /></>,
  <><Ax /><R f={Y} d="M1 3h12v3H1zM1 12h15v3H1z" /><R f={B} d="M1 6h19v4H1zM1 15h12v3H1z" /></>,
  <><Ax /><R f={Y} d="M2 8h4v11H2zM11 5h4v14h-4z" /><R f={B} d="M6 1h3v18H6zM15 8h4v11h-4z" /></>,
  <><Ax /><R f="#777" d="M1 4h6v5H1zM1 12h9v5H1z" /><R f={B} d="M7 4h12v5H7zM10 12h9v5h-9z" /></>,
  <><Ax /><R f={B} d="M4 2h5v12H4zM12 2h6v9h-6z" /><R f="#777" d="M4 14h5v5H4zM12 11h6v8h-6z" /></>,
  <><Ax /><path d="M1 17L7 9l4 3 4-6 5-2" fill="none" stroke={S} strokeWidth="1.200" /><path d="M1 11l5-3 5 4 5-6h4" fill="none" stroke={DB} strokeWidth="1.200" /></>,
  <><R f="#f5dfb8" d="M1 8c4-2 8 0 12-5 3-2 5-1 8 0v6l-8 3-12-2z" /><R f="#a8c8dd" d="M1 10c6 2 12 2 20-3v5c-8 2-14 5-20 1z" /><R f={O} d="M1 14c8 2 12-1 20-1v7H1z" /><Ax /></>,
  <><R f={Y} d="M0 7l5-4 5 4 7-4 6 3v9H0z" /><R f="#6f97bd" d="M0 12l5-3 5 5 7-5 6 3v4H0z" /><R f="#f0a160" d="M0 14l5 4 5-4 7 4 6-4v7H0z" /><path d="M.5 0v21" stroke={G} /></>,
  <><Ax /><R f="#f2b98a" d="M5 4h4v8H5zM12 9h4v5h-4z" /><R f={LG} d="M5 12h4v7H5zM12 14h4v5h-4z" /><path d="M20.500 1v18" stroke={O} /><path d="M1 16l6-5 6 3 7-4" fill="none" stroke={S} /></>,
  <><Ax /><R f={B} d="M6 2h4v17H6zM15 8h3v11h-3z" /><R f={Y} d="M2 9h4v10H2zM11 6h4v13h-4z" /><path d="M20.500 1v18" stroke={O} /><path d="M1 16l6-4 6 3 7-5" fill="none" stroke={S} /></>,
  <><Ax /><R f="#b8b0a4" d="M7 5h4v6H7zM13 5h5v5h-5z" /><R f="#f2d6a2" d="M1 5h3v8H1zM8 11h4v7H8z" /><R f={B} d="M3 10h3v5H3zM6 14h4v4H6zM12 13h3v5h-3zM16 9h3v6h-3z" /></>,
  <><Ax /><R f={LG} d="M3 1h3v17H3zM17 1h3v17h-3z" /><R f={S} d="M6 2h3v8H6zM9 9h3v8H9z" /><R f={GR} d="M13 1h3v14h-3z" /></>,
  <><R f={B} d="M0 2h21v4H0zM5 12h11v3H5z" /><R f={Y} d="M2 7h16v4H2z" /><R f={DB} d="M7 16h7v3H7z" /></>,
  <><Ax /><circle cx="6" cy="6" r="2" fill={S} /><circle cx="4" cy="13" r="2" fill={DB} /><circle cx="11" cy="11" r="2" fill={Y} /><circle cx="14" cy="5" r="2" fill={GR} /><circle cx="15" cy="15" r="2" fill="#777" /><circle cx="19" cy="11" r="2" fill={DB} /></>,
  <><circle cx="10" cy="10" r="9.500" fill={B} /><R f="#f5dfb8" d="M10 10V.500A9.500 9.500 0 0 0 1 8z" /><R f={S} d="M10 10L.7 8.500A9.500 9.500 0 0 0 5 18.500z" /></>,
  <><circle cx="10.500" cy="10" r="7.500" fill="none" stroke={DB} strokeWidth="4.500" /><path d="M10.500 2.500A7.500 7.500 0 0 1 17 6" fill="none" stroke={Y} strokeWidth="4.500" /><path d="M3.500 6a7.500 7.500 0 0 1 4-3M17 14a7.500 7.500 0 0 1-4 3" fill="none" stroke={B} strokeWidth="4.500" /></>,
  <><path d="M1 1h19v18H1z" fill="#fff" stroke={G} strokeWidth="1.500" /><R f={B} d="M6 2h9v6H6z" /><R f="#c7d8ec" d="M16 2h3v8h-3z" /><path d="M1 11h19M5.500 1v10M15 1v10M9 11v8" stroke={G} /></>,
  <g fill="none" stroke="#4a8fa8" strokeWidth="1.100"><circle cx="10" cy="10" r="9.300" fill="#fff" /><ellipse cx="10" cy="10" rx="4.500" ry="9.300" /><path d="M.7 10h18.600M2.500 5h15M2.500 15h15M10 .7v18.600" /></g>,
  <><R f={B} d="M0 6h7l4 3 8 0 2 6-6 2-5-2z" /><R f={LG} d="M2 1h12v6H8zM1 12h9v4l-1 4-5-3zM14 12l6 5-5 2z" /><R f={Y} d="M17 1h4v9h-4z" /></>,
  <><path d="M2 15a8.500 8.500 0 0 1 13-7.500" fill="none" stroke={Y} strokeWidth="4" /><path d="M16 8.500a8 8 0 0 1 3 6.500" fill="none" stroke={GR} strokeWidth="4" /><path d="M9 15l6-6" stroke="#555" strokeWidth="2" /></>,
  <><path d="M.7 3h19.600v13H.7z" fill="#fff" stroke={LG} strokeWidth="1.400" /><text x="2" y="11" fontSize="8.500" fill={DB} textLength="17" lengthAdjust="spacingAndGlyphs">123</text><path d="M3 14h15" stroke={LG} /></>,
  <><path d="M.7.7h19.600v18.600H.7z" fill="#fff" stroke={G} strokeWidth="1.400" /><path d="M3 2v16" stroke={LG} strokeWidth="2" /><R f={B} d="M8 3h3v2H8zM11 5h5v2h-5zM8 9h6v2H8zM8 13h3v2H8z" /></>,
  <><path d="M.7 3h19.600v13H.7z" fill="#fff" stroke={LG} strokeWidth="1.400" /><R f={GR} d="M4 10l3-4 3 4z" /><R f={S} d="M11 6h6l-3 4z" /><path d="M4 13h13" stroke={LG} /></>,
  <><path d="M.7.7h18.600v17.600H.7z" fill="#fff" stroke={LG} /><R f={DB} d="M0 0h20v3H0z" /><R f={O} d="M3 5h4v3H3zM3 13h4v3H3z" /><R f={Y} d="M3 9h4v3H3z" /><R f="#777" d="M10 10h12l-5 5v5h-2v-5z" /></>,
  <><path d="M1.700.7h17.600v18.600H1.700zM1.700 8h17.600M1.700 13h17.600M7 3v16M13 3v16" fill="#fff" stroke={LG} /><R f="#6f97c8" d="M1 0h19v3H1z" /></>,
  <><R f="#c7dbf0" d="M1 3h19v17H1z" /><R f="#fff" d="M2 3h11v11H2z" /><path d="M1.700.7h17.600v18.600H1.700zM1.700 8h17.600M1.700 13h17.600M7 3v16M13 3v16" fill="none" stroke={LG} /><R f={DB} d="M1 0h19v3H1z" /></>,
  <text x="3" y="19" fontSize="25" className="font-extrabold" fill={B} textLength="16" lengthAdjust="spacingAndGlyphs">R</text>,
  <text x="0" y="15" fontSize="19" className="font-bold" fill={B} textLength="21" lengthAdjust="spacingAndGlyphs">Py</text>,
  <><Ax /><path d="M1 2h16M1 8h8M1 14h4" stroke={G} /><circle cx="18" cy="2" r="2.200" fill={DB} /><circle cx="10" cy="7.500" r="2" fill="#666" /><circle cx="5" cy="13" r="2" fill="#666" /><circle cx="18" cy="13" r="4" fill={Y} /><R f={LG} d="M16 17h4v3h-4z" /></>,
  <><path d="M1 2h19v12H8l-4 4v-4H1z" fill="#f6f6f5" stroke="#7a9cc6" strokeWidth="1.800" /><circle cx="18" cy="14" r="4" fill={Y} /><R f={LG} d="M16 18h4v3h-4z" /></>,
  <><circle cx="10.500" cy="10" r="10" fill="#fff" stroke="#999" /><circle cx="10.500" cy="10" r="8.300" fill="#1d76b8" /><path d="M3 7c3-4 8-6 14-4M3 12c4 4 8 5 13 4M8 2l7 16" fill="none" stroke="#49b35c" strokeWidth="2.500" /><path d="M4 16L17 4M5 5l11 11" stroke="#e8f3f8" /></>,
  <><R f="#742774" d="M-2-3h25v25H-2z" /><path d="M4.500 12V6h12v6" fill="none" stroke="#c9a9c9" strokeWidth="1.300" /><circle cx="8.500" cy="11.500" r="1.800" fill="none" stroke="#fff" strokeWidth="1.200" /><circle cx="12.500" cy="11.500" r="1.800" fill="none" stroke="#fff" strokeWidth="1.200" /></>,
  <R f="#333" d="M1 7h2v2H1zM9 7h2v2H9zM17 7h2v2h-2z" />,
];

function Visualizations() {
  return (
    <div className="flex w-[226px] shrink-0 flex-col border-l border-[#d8d6d4] bg-[#f3f2f1] text-[15px] text-[#3b3a39]">
      <div className="flex h-[61px] items-center justify-between pl-[15px] pr-[16px]">
        <T w={123} c="mt-[2px] text-[19px] font-semibold">Visualizations</T>
        <Chev dir="r" />
      </div>
      <div className="ml-[12px] mt-[6px] grid w-[210px] grid-cols-6 gap-y-[10px]">
        {viz.map((v, i) => (
          <svg key={i} className="h-5 w-[21px] overflow-visible" viewBox="0 0 21 20">{v}</svg>
        ))}
      </div>
      <div className="mt-[5px] h-px shrink-0 bg-[#dcdad8]" />
      <div className="flex h-[40px] pl-[27px] pt-[10px]">
        <svg className="h-[25px] w-[25px]" viewBox="0 0 25 25" fill="none" stroke="#252423" strokeWidth="1.400">
          <path d="M0 .8h20" /><path d="M.8 4h23.400v7.500H.8zM.8 16h23.400v7.500H.8z" strokeDasharray="2 1.200" />
        </svg>
        <svg className="ml-[26px] h-[25px] w-[23px]" viewBox="0 0 23 25" fill="none" stroke="#252423" strokeWidth="1.400">
          <path d="M.8.800h17.500v5.500H.8zM18.500 2H22v7H10.500v4M8 13h5v11H8z" />
        </svg>
      </div>
      <div className="ml-[15px] h-[5px] w-[50px] shrink-0 rounded-full bg-[#f2c811]" />
      <T w={42} c="ml-[15px] mt-[7px] leading-5">Values</T>
      <div className="ml-[5px] mt-[7px] flex h-[35px] w-[212px] items-center rounded-[2px] border border-dashed border-[#bbb] bg-white pl-[13px]">
        <T w={133}>Add data fields here</T>
      </div>
      <T w={116} c="ml-[17px] mt-[16px] text-[19px] font-semibold leading-7">Drill through</T>
      <T w={83} c="ml-[11px] mt-[16px] leading-5">Cross-report</T>
      <div className="ml-[22px] mt-[17px] flex h-5 items-center">
        <T w={21}>Off</T>
        <svg className="ml-[5px] h-[15px] w-[37px]" viewBox="0 0 37 15" fill="none" stroke="#605e5c">
          <circle cx="7.500" cy="7.500" r="6" strokeWidth="2.800" /><path d="M14 7.500h23" strokeWidth="2" />
        </svg>
      </div>
      <T w={93} c="ml-[11px] mt-[23px] leading-5">Keep all filters</T>
      <div className="ml-[22px] mt-[17px] flex h-5 items-center">
        <T w={20}>On</T>
        <svg className="ml-[5px] h-[15px] w-[38px]" viewBox="0 0 38 15" fill="#605e5c" stroke="#605e5c">
          <path d="M0 7.500h24" strokeWidth="2" /><circle cx="30" cy="7.500" r="7" />
        </svg>
      </div>
      <div className="ml-[5px] mt-[17px] flex h-[33px] w-[212px] items-center rounded-[2px] border border-dashed border-[#bbb] bg-white pl-[10px]">
        <T w={189}>Add drill-through fields here</T>
      </div>
    </div>
  );
}

function Fields() {
  const rows: [string, number][] = [["Amount", 53], ["Card Type", 66], ["City", 26], ["Date", 31], ["Exp Type", 59], ["Gender", 49]];
  return (
    <div className="flex w-[222px] shrink-0 flex-col border-l border-[#d8d6d4] bg-[#f3f2f1] text-[15px] text-[#252423]">
      <div className="flex h-[61px] items-center justify-between pl-[15px] pr-[11px]">
        <T w={52} c="mt-[2px] text-[19px] font-semibold text-[#3b3a39]">Fields</T>
        <Chev dir="r" />
      </div>
      <div className="ml-[5px] mt-[4px] flex h-[37px] w-[215px] items-center rounded-[2px] border border-[#c0bebc] bg-white">
        <Search c="-mt-[4px] ml-[14px]" />
        <T w={48} c="ml-[10px] mt-[2px] text-[#333]">Search</T>
      </div>
      <div className="mt-[5px] h-px bg-[#dcdad8]" />
      <div className="mt-[12px] flex h-[30px] items-center pl-[5px]">
        <Chev dir="u" />
        <svg className="ml-[8px] h-4 w-[17px]" viewBox="0 0 17 16" fill="#fff" stroke="#252423" strokeWidth="1.200">
          <path d="M.6.600h15.800v14.800H.6z" /><path d="M0 0h17v4H0z" fill="#252423" stroke="none" />
          <path d="M.6 7.800h15.800M.6 11.500h15.800M6 4v11.500M11 4v11.500" />
        </svg>
        <T w={128} c="ml-[14px]">Credit card transa...</T>
      </div>
      <div className="mt-[8px] flex flex-col">
        {rows.map(([t, w]) => (
          <div key={t} className="flex h-[30px] items-center">
            <span className="flex w-[40px] shrink-0 justify-start pl-[15px]">{t === "Date" && <Chev dir="d" />}</span>
            <span className="size-[15px] shrink-0 rounded-[3px] border border-[#605e5c] bg-[#f8f7f6]" />
            <span className="flex w-[31px] shrink-0 pl-[5px]">
              {t === "Amount" && (
                <svg className="ml-[2px] h-3 w-3" viewBox="0 0 12 12" fill="none" stroke="#252423" strokeWidth="1.600"><path d="M11 3V1H1.500l5 5-5 5H11V9" /></svg>
              )}
              {t === "Date" && (
                <svg className="h-4 w-4" viewBox="0 0 16 16" fill="none" stroke="#252423" strokeWidth="1.300">
                  <path d="M.7 2h14.600v13.300H.7zM.7 5.500h14.600M4 0v3.500M12 0v3.500" />
                  <path d="M3.500 9h9M3.500 12h9" strokeWidth="2" strokeDasharray="2 1.500" />
                </svg>
              )}
            </span>
            <T w={w}>{t}</T>
          </div>
        ))}
      </div>
    </div>
  );
}

function PageTabs() {
  return (
    <div className="flex h-[44px] w-[1421px] bg-[#e8e8e8] pt-px text-[15px] text-[#444]">
      <div className="flex w-[50px] items-center border-r border-[#a0a0a0] pl-[7px]">
        <svg className="h-[10px] w-[35px]" viewBox="0 0 35 10" fill="#c4c4c4"><path d="M6 0v10L0 5zM28.500 0v10l6-5z" /></svg>
      </div>
      <div className="flex w-[135px] items-center justify-center border-b-2 border-[#f2c811] bg-white pl-[4px] pt-[2px]"><T w={84}>Dashboard 1</T></div>
      <div className="flex w-[95px] items-center justify-center border-x border-[#c0c0c0] pl-[3px]"><T w={43}>Page 1</T></div>
      <div className="flex w-[49px] items-center justify-center bg-[#f2c811] pr-px pb-px">
        <svg className="size-[14px]" viewBox="0 0 14 14" stroke="#777" strokeWidth="4"><path d="M7 0v14M0 7h14" /></svg>
      </div>
    </div>
  );
}

/* ---------- taskbar ---------- */
function Chrome() {
  return (
    <g>
      <circle cx="14" cy="14" r="14" fill="#fbc116" />
      <path d="M2 7a14 14 0 0 0 9.800 20.800L18.500 17 14 14z" fill="#1da462" />
      <path d="M14 7.500h12.300A14 14 0 0 0 2 7l6 10z" fill="#db4437" />
      <path d="M26.300 7.500H14l5 10-7 10.400A14 14 0 0 0 26.300 7.500z" fill="#fbc92c" />
      <circle cx="14" cy="14" r="6.500" fill="#fff" />
      <circle cx="14" cy="14" r="5.200" fill="#4285f4" />
    </g>
  );
}
function Tile({ w, children, c = "border-transparent" }: { w: string; c?: string; children: React.ReactNode }) {
  return (
    <div className={"flex h-[50px] shrink-0 items-center justify-center border-b-[3px] pt-[3px] " + w + " " + c}>
      <svg className="size-[30px] overflow-visible" viewBox="0 0 30 30">{children}</svg>
    </div>
  );
}
function Taskbar() {
  return (
    <div className="flex h-[50px] shrink-0 items-center bg-[linear-gradient(90deg,#1f1f1f_0,#1f1f1f_60px,#2e2528_490px,#2a2628_600px,#302729_700px,#302729_1100px,#1e1d1d_1500px,#1c1c1c)] text-white">
      <svg className="ml-5 size-5" viewBox="0 0 20 20" fill="#fff"><path d="M0 2.800l8.300-1.200v8H0zM9.300 1.400L20 0v9.600H9.300zM0 10.500h8.300v8L0 17.300zM9.300 10.500H20V20L9.300 18.600z" /></svg>
      <div className="ml-5 flex h-[50px] w-[430px] items-center border border-[#5c5c5c] bg-[#333]">
        <Search c="ml-[14px]" color="#eee" />
        <T w={164} c="ml-[15px] text-[19.5px] text-[#ddd]">Type here to search</T>
      </div>
      <Tile w="w-[60px]"><circle cx="15" cy="15" r="8.500" fill="none" stroke="#fff" strokeWidth="2.600" /></Tile>
      <Tile w="w-[60px]"><path d="M5.500 5v4h12V5M5.500 12h12v8h-12zM5.500 25v-3h12v3M22.500 5v4M22.500 17v8" fill="none" stroke="#fff" strokeWidth="1.300" /><path d="M21 11h3v4h-3z" fill="#fff" /></Tile>
      <Tile w="w-[68px]">
        <defs>
          <linearGradient id="eg" x1="0" y1="0" x2="1" y2="0.3"><stop offset="0" stopColor="#2aa7e8" /><stop offset="0.6" stopColor="#2fc3b8" /><stop offset="1" stopColor="#5fdc54" /></linearGradient>
        </defs>
        <path d="M0 13C1 5 8 0 15 0c9 0 15 7 15 13 0 5-4 8-8 8-4 0-5-2-4-4 3-5-2-9-7-8-5 0-9 2-11 4z" fill="url(#eg)" />
        <path d="M0 13c-1 9 6 17 15 17-7-3-9-12-4-17 1-2 3-3 5-3C9 5 2 8 0 13z" fill="#1b7fd4" />
        <path d="M11 13c-5 6-2 15 6 17 5 0 10-4 11-8-7 4-17 1-17-9z" fill="#0c4fa0" />
      </Tile>
      <Tile w="w-[56px]"><path d="M7.500 2L15 6.700 7.500 11.500 0 6.700zM22.500 2L30 6.700l-7.500 4.800L15 6.700zM7.500 11.500L15 16.300 7.500 21 0 16.300zM22.500 11.500l7.500 4.800-7.500 4.700-7.500-4.700zM7.500 22.500L15 18l7.500 4.500L15 27.300z" fill="#fff" /></Tile>
      <Tile w="w-[66px]">
        <path d="M0 0h30v8l-2 20-3 2H5l-3-2L0 8z" fill="#141414" />
        <path d="M.8 1l.8 19 2.400 9M29.200 1l-.8 19-2.400 9" fill="none" stroke="#17b3c4" strokeWidth="1.600" />
        <path d="M6 6l4 5 3 2 2-3 2 3 3-2 4-5-1 12-4 3-1.500 4-2.500-8-2.500 8L11 21l-4-3z" fill="#7f8488" />
        <path d="M10 14l3 3M20 14l-3 3" stroke="#141414" strokeWidth="2" />
      </Tile>
      <Tile w="w-[60px]"><g transform="translate(1 1)"><Chrome /></g></Tile>
      <Tile w="w-[62px]">
        <path d="M0 10L15 0l15 10v18H0z" fill="#0a5fa8" />
        <path d="M2 10h26L15 21z" fill="#f2f2f2" />
        <path d="M0 10l15 11 15-11v19H0z" fill="#2a9fe8" />
        <path d="M0 29L30 10v19z" fill="#1583cf" />
        <circle cx="30" cy="24.500" r="10" fill="#222" stroke="#999" />
        <text x="26" y="30" fontSize="14.500" className="font-bold" fill="#fff">3</text>
      </Tile>
      <div className="w-[7px] shrink-0" />
      <Tile w="w-[51px]" c="border-[#76b9ed]">
        <defs><linearGradient id="ff" x1="0.8" y1="0" x2="0.2" y2="1"><stop offset="0" stopColor="#ffe03a" /><stop offset="0.5" stopColor="#ff7a1a" /><stop offset="1" stopColor="#f0197a" /></linearGradient></defs>
        <path d="M2 7l1 1 1-4 3 4c2-1 4-1 6 0 0-4 3-7 5-8 0 4 6 6 8 11 5 9-2 19-12 19C4 30-2 22 .5 13z" fill="url(#ff)" />
        <circle cx="14" cy="15.500" r="6" fill="#8443d8" />
        <path d="M2 10c4-3 9-1 12 2-3 0-5 2-6 5-3-2-5-4-6-7z" fill="#ff9a2a" />
      </Tile>
      <div className="w-[11px] shrink-0" />
      <Tile w="w-[51px]" c="border-[#76b9ed]">
        <g transform="translate(.5 1)"><Chrome /></g>
        <circle cx="21.500" cy="21.500" r="9.500" fill="#6f8a99" />
        <text x="18" y="26" fontSize="12" className="font-bold" fill="#d5dde2">S</text>
      </Tile>
      <div className="w-[6px] shrink-0" />
      <Tile w="w-[57px]" c="border-[#76b9ed] bg-[#5c5356] pl-px">
        <rect x=".5" width="30" height="30" fill="#f2c811" />
        <path d="M7.500 21C5.500 21 5 20.500 5 18.500V10c0-2 .5-2.500 2.500-2.500h15c2 0 2.500.5 2.500 2.500v8.500c0 2-.5 2.500-1.500 2.500" fill="none" stroke="#252423" strokeWidth="1.400" />
        <path d="M9.500 20v2M13 17.500v4.500M16.500 15.500v6.500M20 13v9" stroke="#252423" strokeWidth="2.200" strokeLinecap="round" />
      </Tile>
      <div className="h-[50px] w-[4px] shrink-0 border-b-[3px] border-l border-b-[#76b9ed] border-l-[#222] bg-[#4d4548]" />
      <svg className="ml-auto h-[9px] w-4" viewBox="0 0 16 9" fill="none" stroke="#fff" strokeWidth="1.400"><path d="M.5 8.500L8 1l7.500 7.500" /></svg>
      <svg className="ml-[12px] h-4 w-5" viewBox="0 0 20 16" fill="none" stroke="#eee" strokeWidth="1.200"><path d="M.6 5h2.400l4-3.500v13L3 11H.6zM10 5.500c1.500 1.500 1.500 3.500 0 5M13 3.500c2.500 2.500 2.500 6.500 0 9M16 1c4 4 4 10 0 14" /></svg>
      <svg className="ml-[13px] h-4 w-4" viewBox="0 0 16 16" fill="none" stroke="#ddd" strokeWidth="1.200"><path d="M1 15C1 7 7 1 15 1M4.500 15C4.500 9 9 4.500 15 4.500M8 15c0-4 3-7 7-7" /><circle cx="13.500" cy="13.500" r="1.800" fill="#fff" /></svg>
      <svg className="ml-[11px] h-[14px] w-5" viewBox="0 0 20 14" fill="none" stroke="#fff" strokeWidth="1.200"><path d="M6 3h12v10H4V8.500M18.500 6v4M1.500 0v2M4.500 0v2M.5 2.500h5v3h-5zM3 5.500v4" /><path d="M6 5h10.500v6.500H6z" fill="#fff" /></svg>
      <T w={29} c="ml-[13px] mt-[2px] text-[14.5px]">ENG</T>
      <div className="ml-[16px] flex flex-col items-center text-[15px] leading-[23px]">
        <T w={36}>01:12</T>
        <T w={76}>20-07-2020</T>
      </div>
      <svg className="ml-[23px] h-[21px] w-5" viewBox="0 0 20 21" fill="none" stroke="#fff" strokeWidth="1.300"><path d="M.7 1h18.600v15.500h-6.500L10 19.500l-2.800-3H.7z" /></svg>
      <div className="ml-[25px] mr-[5px] h-[50px] w-px bg-[#6a6a6a]" />
    </div>
  );
}

export default function App() {
  return (
    <div className="flex h-[1080px] w-[1920px] flex-col overflow-hidden bg-[#f3f2f1] font-['Open_Sans',sans-serif]">
      <TitleBar />
      <Tabs />
      <Ribbon />
      <div className="flex h-[798px] shrink-0">
        <Rail />
        <div className="flex w-[1421px] shrink-0 flex-col">
          <div className="flex h-[754px] items-start bg-white">
            <div className="w-[1171px] shrink-0 border-r-2 border-dotted border-[#555]"><Report /></div>
            <Filters />
          </div>
          <PageTabs />
        </div>
        <Visualizations />
        <Fields />
      </div>
      <div className="flex h-[26px] shrink-0 items-center justify-between pl-[6px] pr-[7px] text-[14px] text-[#444]">
        <T w={77} c="mt-[1px]">PAGE 1 OF 2</T>
        <T w={270} c="-mt-[5px]">UPDATE AVAILABLE (CLICK TO DOWNLOAD)</T>
      </div>
      <Taskbar />
    </div>
  );
}
